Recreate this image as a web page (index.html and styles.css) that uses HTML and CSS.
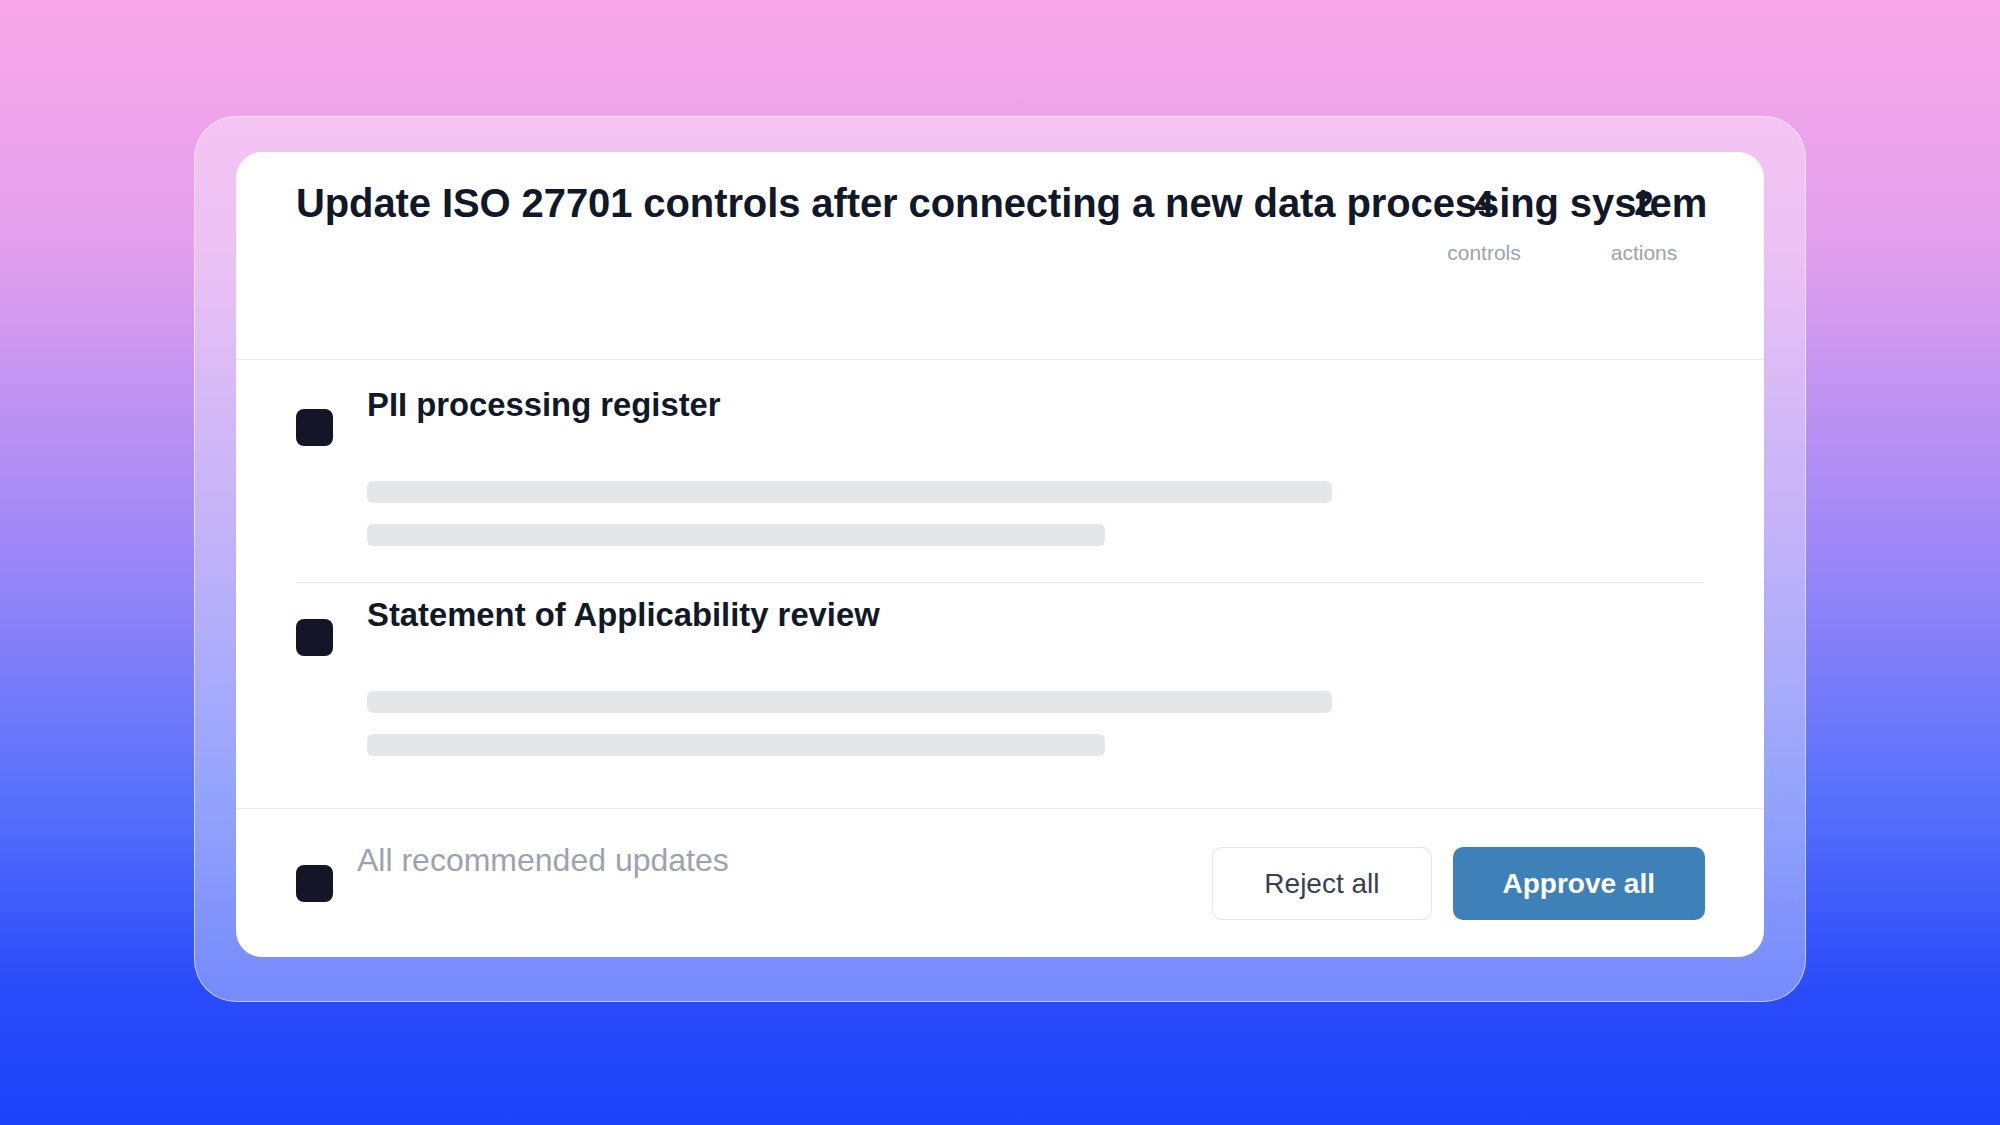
FILE: index.html
```html
<!DOCTYPE html>
<html lang="en">
<head>
<meta charset="utf-8">
<title>Update ISO 27701 controls</title>
<link rel="stylesheet" href="styles.css">
</head>
<body>
<div class="stage">
  <div class="frame">
    <div class="card">
      <header class="card-header">
        <h1 class="title">Update ISO 27701 controls after connecting a new data processing system</h1>
        <div class="stats">
          <div class="stat"><div class="stat-num">4</div><div class="stat-label">controls</div></div>
          <div class="stat"><div class="stat-num">2</div><div class="stat-label">actions</div></div>
        </div>
      </header>
      <div class="list">
        <div class="item">
          <span class="check"></span>
          <div class="item-body">
            <div class="item-title">PII processing register</div>
            <div class="bar bar-long"></div>
            <div class="bar bar-short"></div>
          </div>
        </div>
        <div class="item">
          <span class="check"></span>
          <div class="item-body">
            <div class="item-title">Statement of Applicability review</div>
            <div class="bar bar-long"></div>
            <div class="bar bar-short"></div>
          </div>
        </div>
      </div>
      <footer class="card-footer">
        <div class="footer-left">
          <span class="check"></span>
          <span class="footer-label">All recommended updates</span>
        </div>
        <div class="actions">
          <button class="btn btn-reject">Reject all</button>
          <button class="btn btn-approve">Approve all</button>
        </div>
      </footer>
    </div>
  </div>
</div>
</body>
</html>
```

FILE: styles.css
```css
html, body {
  margin: 0;
  padding: 0;
}
body {
  width: 2000px;
  height: 1125px;
  overflow: hidden;
  font-family: "Liberation Sans", Arial, sans-serif;
  background: linear-gradient(180deg, #f9a8e8 0%, #e29fed 22%, #9a86f7 50%, #5a72fb 70%, #2a4bfa 88%, #1c43fa 100%);
}
.stage {
  height: 1125px;
  display: flex;
  align-items: center;
  justify-content: center;
}
.frame {
  width: 1612px;
  box-sizing: border-box;
  padding: 35px 41px 44px;
  border-radius: 42px;
  background: rgba(255, 255, 255, 0.36);
  border: 1.5px solid rgba(255, 255, 255, 0.55);
  margin-top: -8px;
}
.card {
  background: #ffffff;
  border-radius: 26px;
  overflow: hidden;
}
.card-header {
  position: relative;
  box-sizing: border-box;
  min-height: 208px;
  padding: 27px 60px 0;
  border-bottom: 1px solid #e9eaee;
}
.title {
  margin: 0;
  font-size: 40px;
  line-height: 48px;
  font-weight: 700;
  color: #111827;
  white-space: nowrap;
  letter-spacing: -0.1px;
}
.stats {
  position: absolute;
  top: 31px;
  right: 60px;
  display: flex;
  gap: 40px;
}
.stat {
  min-width: 120px;
  text-align: center;
}
.stat-num {
  font-size: 35px;
  line-height: 40px;
  font-weight: 700;
  color: #111827;
}
.stat-label {
  margin-top: 18px;
  font-size: 21px;
  line-height: 24px;
  color: #9ca3af;
}
.list {
  padding: 13px 60px 16px;
  border-bottom: 1px solid #e9eaee;
}
.item {
  display: flex;
  align-items: flex-start;
  gap: 34px;
  padding: 13px 0 36px;
}
.item + .item {
  border-top: 1px solid #e5e7eb;
}
.check {
  flex: none;
  width: 37px;
  height: 37px;
  border-radius: 8px;
  background: #141628;
}
.item .check {
  margin-top: 23px;
}
.item-body {
  flex: 1;
}
.item-title {
  font-size: 32.8px;
  line-height: 38px;
  font-weight: 700;
  color: #111827;
  margin-bottom: 57px;
}
.bar {
  height: 22px;
  border-radius: 6px;
  background: #e5e6ea;
}
.bar + .bar {
  margin-top: 21px;
}
.bar-long {
  width: 965px;
}
.bar-short {
  width: 738px;
}
.card-footer {
  display: flex;
  align-items: center;
  justify-content: space-between;
  padding: 32px 59px 30px 60px;
}
.footer-left {
  display: flex;
  align-items: center;
  gap: 24px;
}
.footer-label {
  font-size: 32px;
  line-height: 38px;
  color: #9ca3af;
  padding-bottom: 48px;
}
.actions {
  display: flex;
  gap: 21px;
}
.btn {
  height: 73px;
  border-radius: 10px;
  font-family: "Liberation Sans", Arial, sans-serif;
  font-size: 28px;
  cursor: pointer;
}
.btn-reject {
  padding: 0 51px;
  background: #ffffff;
  border: 1.5px solid #e3e5ea;
  color: #374151;
}
.btn-approve {
  padding: 0 50px;
  background: #3d81b8;
  border: none;
  color: #ffffff;
  font-weight: 700;
}
```
